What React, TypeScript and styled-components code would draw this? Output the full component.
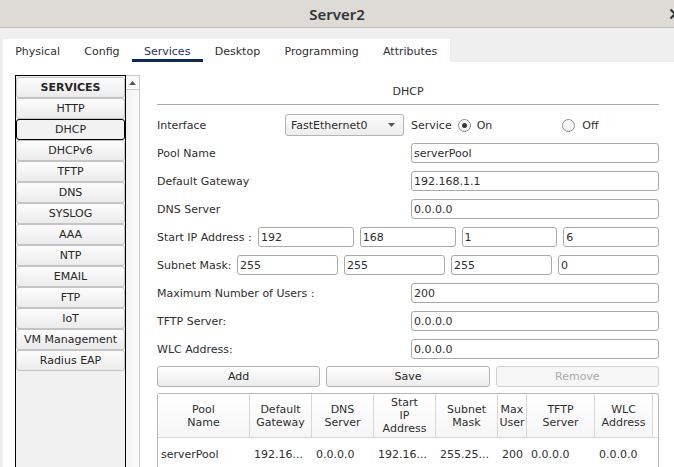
import React from 'react';
import styled, { createGlobalStyle } from 'styled-components';

const GlobalStyle = createGlobalStyle`
  html, body { margin: 0; padding: 0; }
  body {
    font-family: "DejaVu Sans", "Liberation Sans", sans-serif;
    font-size: 11px;
    color: #2e2e2e;
    background: #efefef;
    overflow: hidden;
  }
  * { box-sizing: border-box; }
`;

const Window = styled.div`
  width: 674px;
  height: 467px;
  display: flex;
  flex-direction: column;
  overflow: hidden;
  background: #efefef;
`;

const TitleBar = styled.div`
  flex: none;
  height: 28px;
  display: grid;
  grid-template-columns: 1fr auto 1fr;
  align-items: center;
  background: #dedbd7;
  border-bottom: 1px solid #bcb8b3;
`;

const Title = styled.div`
  grid-column: 2;
  font-family: "Noto Sans", "DejaVu Sans", sans-serif;
  font-weight: 600;
  font-size: 15px;
  color: #2e3436;
`;

const Close = styled.div`
  grid-column: 3;
  justify-self: end;
  margin-right: -7px;
  display: flex;
`;

const Body = styled.div`
  flex: 1;
  min-height: 0;
  display: flex;
  flex-direction: column;
  padding: 11px 0 0 3px;
`;

const TabStrip = styled.div`
  flex: none;
  display: flex;
  width: 447px;
  height: 23px;
  background: #fff;
`;

const Tab = styled.div<{ $active?: boolean }>`
  display: flex;
  align-items: center;
  padding: 4px 12.2px 0;
  border-bottom: 3px solid ${(p) => (p.$active ? '#0f2a52' : 'transparent')};
  color: ${(p) => (p.$active ? '#1b355e' : '#2e2e2e')};
  white-space: nowrap;
`;

const Pane = styled.div`
  flex: 1;
  min-height: 0;
  display: flex;
  background: #fff;
`;

const ServicesColumn = styled.div`
  flex: none;
  display: flex;
  padding: 13px 0 0 12px;
`;

const ListBox = styled.div`
  width: 111px;
  display: flex;
  flex-direction: column;
  border: 1px solid #000;
  border-bottom: none;
  background: #f0f0f0;
  padding-top: 1px;
`;

const ServiceButton = styled.div<{ $selected?: boolean; $header?: boolean }>`
  height: 21px;
  display: flex;
  align-items: center;
  justify-content: center;
  border: 1px solid ${(p) => (p.$selected ? '#000' : '#c4c4c4')};
  border-radius: 3px;
  background: ${(p) =>
    p.$selected ? '#f2f2f2' : 'linear-gradient(#fdfdfd, #ebebeb)'};
  font-weight: ${(p) => (p.$header ? 700 : 400)};
  color: #262626;
`;

const Scrollbar = styled.div`
  width: 14px;
  display: flex;
  flex-direction: column;
  border: 1px solid #c8c8c8;
  border-left: none;
  border-bottom: none;
  background: linear-gradient(to right, #f2f2f2, #fcfcfc);
`;

const ScrollUp = styled.div`
  height: 14px;
  display: flex;
  align-items: center;
  justify-content: center;
  border-bottom: 1px solid #c8c8c8;
  background: #fafafa;
`;

const Main = styled.div`
  flex: 1;
  min-width: 0;
  display: flex;
  flex-direction: column;
  padding: 23px 15px 0 17px;
`;

const Heading = styled.div`
  line-height: 14px;
  text-align: center;
  padding-bottom: 5px;
  border-bottom: 1px solid #a8a8a8;
`;

const Form = styled.div`
  display: flex;
  flex-direction: column;
  gap: 8px;
  margin-top: 9px;
`;

const Row = styled.div<{ $h?: number; $mb?: number }>`
  display: flex;
  align-items: center;
  height: ${(p) => p.$h ?? 20}px;
  margin-bottom: ${(p) => p.$mb ?? 0}px;
`;

const Label = styled.div<{ $w: number }>`
  flex: none;
  width: ${(p) => p.$w}px;
  white-space: nowrap;
`;

const Fields = styled.div`
  flex: 1 1 0;
  min-width: 0;
  display: flex;
  gap: 6px;
  height: 100%;
`;

const TextInput = styled.input`
  flex: 1 1 0;
  width: 0;
  min-width: 0;
  height: 100%;
  margin: 0;
  padding: 0 2px;
  border: 1px solid #a9a9a9;
  border-radius: 3px;
  background: #fff;
  font: inherit;
  color: #2e2e2e;
  outline: none;
`;

const Select = styled.div`
  flex: none;
  width: 119px;
  height: 100%;
  display: flex;
  align-items: center;
  justify-content: space-between;
  padding: 0 8px 0 5px;
  border: 1px solid #b3b3b3;
  border-radius: 3px;
  background: linear-gradient(#fcfcfc, #ededed);
`;

const Inline = styled.span<{ $ml?: number }>`
  margin-left: ${(p) => p.$ml ?? 0}px;
`;

const RadioCircle = styled.span<{ $ml?: number }>`
  flex: none;
  width: 13px;
  height: 13px;
  margin-left: ${(p) => p.$ml ?? 0}px;
  border: 1px solid #8d8d8d;
  border-radius: 50%;
  background: linear-gradient(#ffffff, #f1f1f1);
  display: flex;
  align-items: center;
  justify-content: center;
`;

const RadioDot = styled.span`
  width: 5px;
  height: 5px;
  border-radius: 50%;
  background: #363636;
`;

const ButtonRow = styled.div`
  display: flex;
  gap: 6px;
  margin-top: 7px;
`;

const Button = styled.div<{ $disabled?: boolean }>`
  flex: 1 1 0;
  height: 21px;
  display: flex;
  align-items: center;
  justify-content: center;
  border: 1px solid ${(p) => (p.$disabled ? '#d0d0d0' : '#b3b3b3')};
  border-radius: 3px;
  background: ${(p) => (p.$disabled ? '#f6f6f6' : 'linear-gradient(#fdfdfd, #ececec)')};
  color: ${(p) => (p.$disabled ? '#a9a9a9' : '#262626')};
`;

const Table = styled.div`
  flex: 1;
  margin-top: 6px;
  border: 1px solid #b9b9b9;
  border-bottom: none;
  border-radius: 3px 3px 0 0;
  background: #fff;
`;

const columns = '92px 62px 62px 62px 62px 29px 68px 58px';

const HeaderRow = styled.div`
  display: grid;
  grid-template-columns: ${columns};
  height: 44px;
  border-bottom: 1px solid #d4d4d4;
`;

const HeaderCell = styled.div`
  display: flex;
  align-items: center;
  justify-content: center;
  text-align: center;
  line-height: 13px;
  border-right: 1px solid #d8d8d8;
  background: linear-gradient(#ffffff, #f6f6f6);
  color: #2e2e2e;
`;

const DataRow = styled.div`
  display: grid;
  grid-template-columns: ${columns};
  padding-top: 10px;
  line-height: 14px;
`;

const DataCell = styled.div<{ $pad?: number }>`
  padding-left: ${(p) => p.$pad ?? 4}px;
  white-space: nowrap;
  overflow: hidden;
`;

const services = [
  'HTTP',
  'DHCP',
  'DHCPv6',
  'TFTP',
  'DNS',
  'SYSLOG',
  'AAA',
  'NTP',
  'EMAIL',
  'FTP',
  'IoT',
  'VM Management',
  'Radius EAP',
];

const tabs = ['Physical', 'Config', 'Services', 'Desktop', 'Programming', 'Attributes'];

const headers = [
  ['Pool', 'Name'],
  ['Default', 'Gateway'],
  ['DNS', 'Server'],
  ['Start', 'IP', 'Address'],
  ['Subnet', 'Mask'],
  ['Max', 'User'],
  ['TFTP', 'Server'],
  ['WLC', 'Address'],
];

const rowData = ['serverPool', '192.16...', '0.0.0.0', '192.16...', '255.25...', '200', '0.0.0.0', '0.0.0.0'];

const Radio: React.FC<{ checked?: boolean; ml?: number }> = ({ checked, ml }) => (
  <RadioCircle $ml={ml}>{checked && <RadioDot />}</RadioCircle>
);

const FieldRow: React.FC<{ label: string; value: string }> = ({ label, value }) => (
  <Row>
    <Label $w={254}>{label}</Label>
    <Fields>
      <TextInput readOnly value={value} />
    </Fields>
  </Row>
);

const App: React.FC = () => {
  return (
    <>
      <GlobalStyle />
      <Window>
        <TitleBar>
          <Title>Server2</Title>
          <Close>
            <svg width="12" height="12" viewBox="0 0 12 12">
              <path d="M1.5 1.5 L10.5 10.5 M10.5 1.5 L1.5 10.5" stroke="#2e3436" strokeWidth="2" />
            </svg>
          </Close>
        </TitleBar>
        <Body>
          <TabStrip>
            {tabs.map((t) => (
              <Tab key={t} $active={t === 'Services'}>
                {t}
              </Tab>
            ))}
          </TabStrip>
          <Pane>
            <ServicesColumn>
              <ListBox>
                <ServiceButton $header>SERVICES</ServiceButton>
                {services.map((s) => (
                  <ServiceButton key={s} $selected={s === 'DHCP'}>
                    {s}
                  </ServiceButton>
                ))}
              </ListBox>
              <Scrollbar>
                <ScrollUp>
                  <svg width="7" height="4" viewBox="0 0 7 4">
                    <path d="M0 4 L3.5 0 L7 4 Z" fill="#555" />
                  </svg>
                </ScrollUp>
              </Scrollbar>
            </ServicesColumn>
            <Main>
              <Heading>DHCP</Heading>
              <Form>
                <Row $h={22} $mb={-1}>
                  <Label $w={128}>Interface</Label>
                  <Select>
                    <span>FastEthernet0</span>
                    <svg width="7" height="4" viewBox="0 0 7 4">
                      <path d="M0 0 L7 0 L3.5 4 Z" fill="#555" />
                    </svg>
                  </Select>
                  <Inline $ml={7}>Service</Inline>
                  <Radio checked ml={6} />
                  <Inline $ml={6}>On</Inline>
                  <Radio ml={70} />
                  <Inline $ml={7}>Off</Inline>
                </Row>
                <FieldRow label="Pool Name" value="serverPool" />
                <FieldRow label="Default Gateway" value="192.168.1.1" />
                <FieldRow label="DNS Server" value="0.0.0.0" />
                <Row>
                  <Label $w={101}>Start IP Address :</Label>
                  <Fields>
                    {['192', '168', '1', '6'].map((v, i) => (
                      <TextInput key={i} readOnly value={v} />
                    ))}
                  </Fields>
                </Row>
                <Row>
                  <Label $w={80}>Subnet Mask:</Label>
                  <Fields>
                    {['255', '255', '255', '0'].map((v, i) => (
                      <TextInput key={i} readOnly value={v} />
                    ))}
                  </Fields>
                </Row>
                <FieldRow label="Maximum Number of Users :" value="200" />
                <FieldRow label="TFTP Server:" value="0.0.0.0" />
                <FieldRow label="WLC Address:" value="0.0.0.0" />
              </Form>
              <ButtonRow>
                <Button>Add</Button>
                <Button>Save</Button>
                <Button $disabled>Remove</Button>
              </ButtonRow>
              <Table>
                <HeaderRow>
                  {headers.map((h, i) => (
                    <HeaderCell key={i}>
                      <div>
                        {h.map((line) => (
                          <div key={line}>{line}</div>
                        ))}
                      </div>
                    </HeaderCell>
                  ))}
                </HeaderRow>
                <DataRow>
                  {rowData.map((v, i) => (
                    <DataCell key={i} $pad={i === 0 ? 3 : 4}>
                      {v}
                    </DataCell>
                  ))}
                </DataRow>
              </Table>
            </Main>
          </Pane>
        </Body>
      </Window>
    </>
  );
};

export default App;
